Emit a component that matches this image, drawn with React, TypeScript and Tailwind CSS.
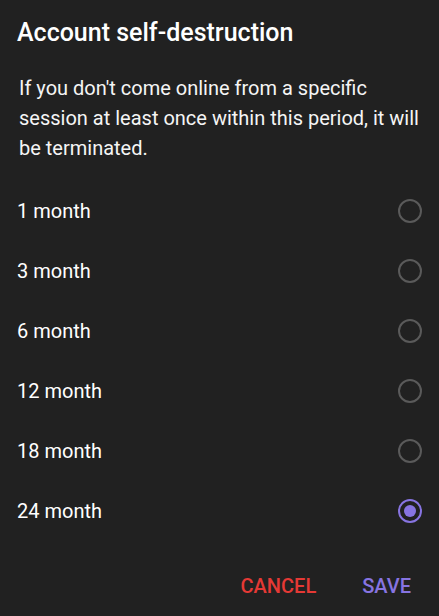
import { useState } from 'react';

const periods = ['1 month', '3 month', '6 month', '12 month', '18 month', '24 month'];

export default function App() {
  const [selected, setSelected] = useState('24 month');

  return (
    <div className="w-[439px] h-[616px] bg-[#212121] text-white flex flex-col" style={{ fontFamily: 'Roboto, "Noto Sans", sans-serif' }}>
      <h1 className="px-[17px] pt-[18px] text-[25px] font-medium leading-[30px]">Account self-destruction</h1>
      <p className="pl-[19px] pr-[17px] mt-[25px] text-[20px] leading-[30px] text-[#f5f5f5]">
        If you don't come online from a specific session at least once within this period, it will be terminated.
      </p>

      <div className="mt-[18px] flex flex-col">
        {periods.map(p => (
          <button
            key={p}
            onClick={() => setSelected(p)}
            className="h-[60px] flex items-center justify-between pl-[17px] pr-[17px] text-left"
          >
            <span className="text-[20px]">{p}</span>
            {selected === p ? (
              <span className="w-6 h-6 rounded-full border-2 border-[#8774e1] flex items-center justify-center">
                <span className="w-3 h-3 rounded-full bg-[#8774e1]" />
              </span>
            ) : (
              <span className="w-6 h-6 rounded-full border-2 border-[#5a5a5a]" />
            )}
          </button>
        ))}
      </div>

      <div className="mt-auto mb-[15px] h-[30px] flex items-center justify-end gap-[46px] pr-[28px]">
        <button className="text-[20px] font-medium text-[#e53935] uppercase">Cancel</button>
        <button className="text-[20px] font-medium text-[#8774e1] uppercase">Save</button>
      </div>
    </div>
  );
}
